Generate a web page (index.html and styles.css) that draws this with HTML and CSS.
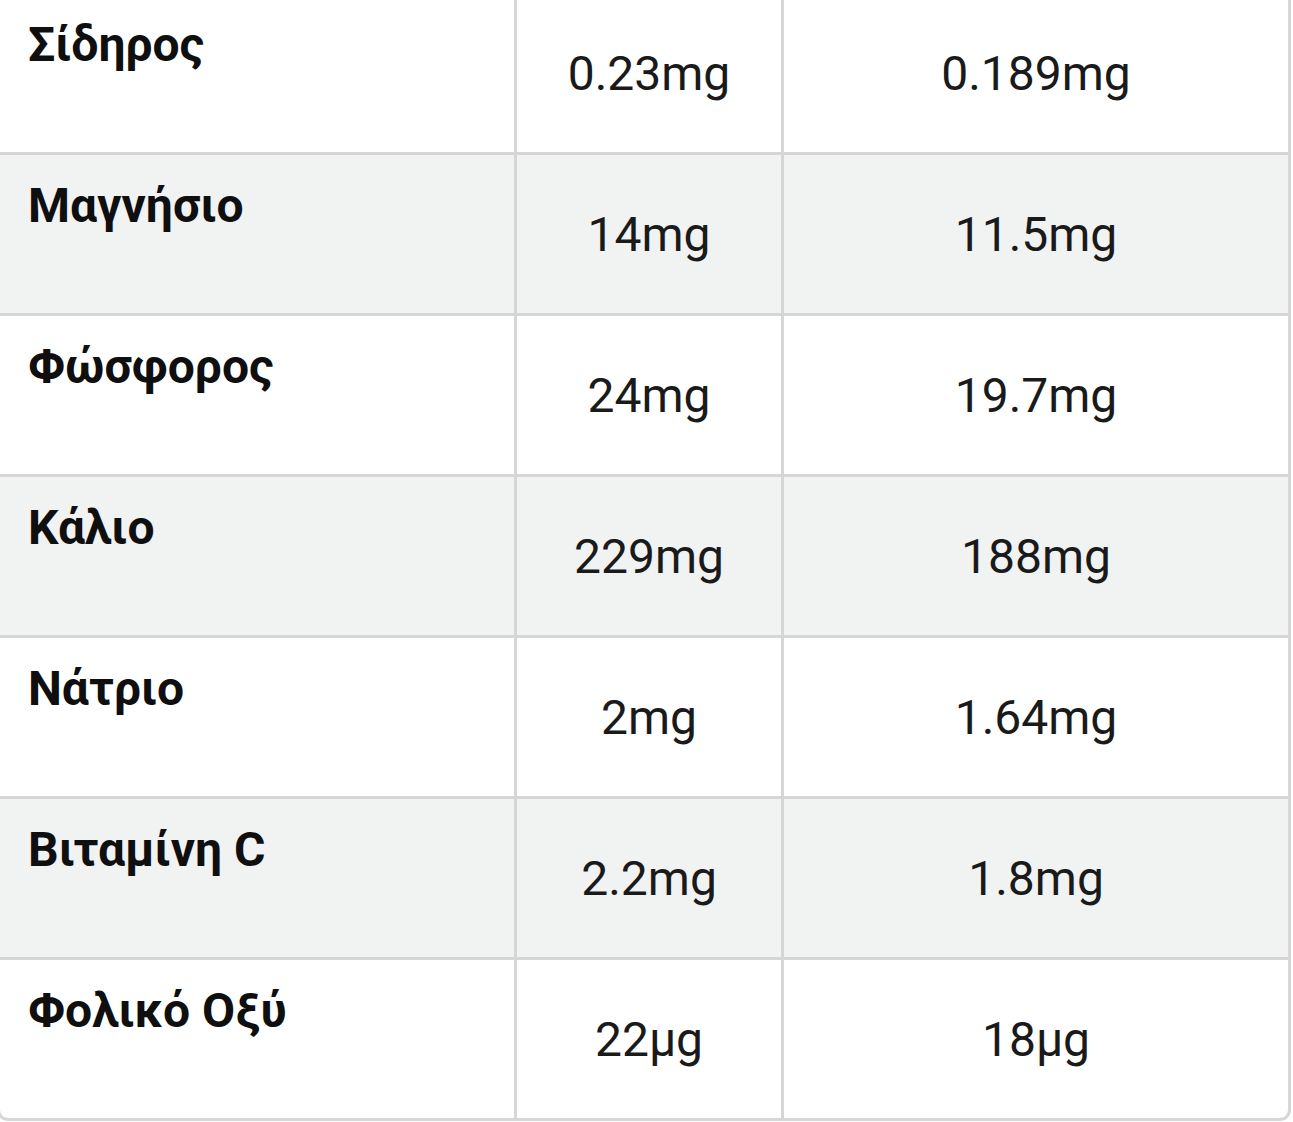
FILE: index.html
```html
<!DOCTYPE html>
<html lang="el">
<head>
<meta charset="utf-8">
<title>Διατροφική αξία</title>
<link rel="stylesheet" href="styles.css">
</head>
<body>
<div class="wrap">
<table class="nutri">
  <tbody>
    <tr><td class="name">Σίδηρος</td><td class="val">0.23mg</td><td class="val">0.189mg</td></tr>
    <tr><td class="name">Μαγνήσιο</td><td class="val">14mg</td><td class="val">11.5mg</td></tr>
    <tr><td class="name">Φώσφορος</td><td class="val">24mg</td><td class="val">19.7mg</td></tr>
    <tr><td class="name">Κάλιο</td><td class="val">229mg</td><td class="val">188mg</td></tr>
    <tr><td class="name">Νάτριο</td><td class="val">2mg</td><td class="val">1.64mg</td></tr>
    <tr><td class="name">Βιταμίνη C</td><td class="val">2.2mg</td><td class="val">1.8mg</td></tr>
    <tr><td class="name">Φολικό Οξύ</td><td class="val">22μg</td><td class="val">18μg</td></tr>
  </tbody>
</table>
</div>
</body>
</html>
```
FILE: styles.css
```css
html, body {
  margin: 0;
  padding: 0;
  background: #ffffff;
  overflow: hidden;
}
body {
  font-family: Roboto, "Liberation Sans", Arial, sans-serif;
  color: #161616;
}
.wrap {
  margin-top: -9px;
  margin-left: -3px;
  width: 1294px;
}
.nutri {
  width: 1294px;
  table-layout: fixed;
  border-collapse: separate;
  border-spacing: 0;
  border: 3px solid #d6d6d6;
  border-radius: 11px;
  overflow: hidden;
}
.nutri td {
  box-sizing: border-box;
  height: 161px;
  border-bottom: 3px solid #d6d6d6;
  border-right: 3px solid #d6d6d6;
  font-size: 48px;
  line-height: normal;
  padding: 0;
}
.nutri tr:last-child td {
  border-bottom: 0;
  height: 158px;
}
.nutri tr:nth-child(even) td {
  background: #f1f2f2;
}
.nutri td:nth-child(1) { width: 517px; }
.nutri td:nth-child(2) { width: 267px; }
.nutri td:nth-child(3) { width: 504px; border-right: 0; }
.name {
  vertical-align: top;
  font-weight: 700;
  padding: 22px 0 0 28px !important;
  color: #0f0f0f;
}
.val {
  vertical-align: middle;
  text-align: center;
  font-weight: 400;
  color: #1a1a1a;
}
```
